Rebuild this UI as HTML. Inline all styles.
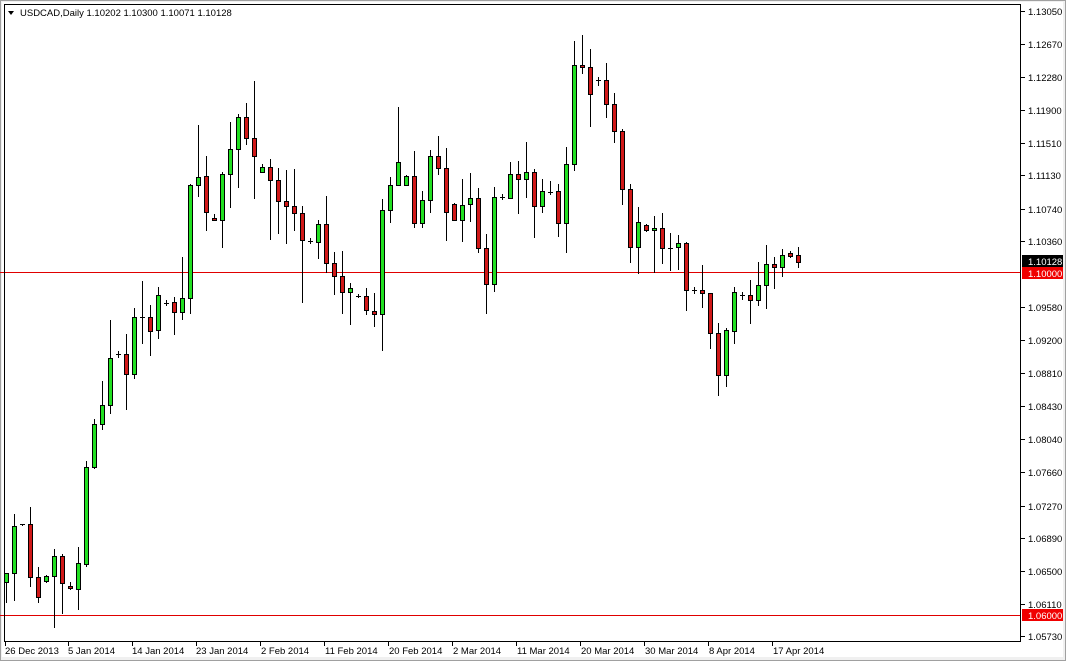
<!DOCTYPE html>
<html><head><meta charset="utf-8"><style>
html,body{margin:0;padding:0;background:#fff;}
body{width:1066px;height:661px;overflow:hidden;position:relative;font-family:"Liberation Sans",sans-serif;}
svg{position:absolute;left:0;top:0;}
svg text{font-family:"Liberation Sans",sans-serif;font-size:9.5px;fill:#000;}
</style></head><body>
<svg id="s" width="1066" height="661" xmlns="http://www.w3.org/2000/svg" shape-rendering="crispEdges">
<rect x="0" y="0" width="1066" height="661" fill="#f0f0f0"/>
<rect x="2" y="2" width="1061" height="655" fill="#fff"/>
<rect x="0.5" y="0.5" width="1065" height="660" fill="none" stroke="#a0a0a0"/>
<line x1="0" y1="272.5" x2="1021" y2="272.5" stroke="#e00000"/>
<line x1="0" y1="615.5" x2="1021" y2="615.5" stroke="#e00000"/>
<g id="c"></g>
<rect x="4.5" y="4.5" width="1016" height="637" fill="none" stroke="#000"/>
<path d="M8 11 L14 11 L11 15 Z" fill="#000" shape-rendering="auto"/>
<text x="20" y="16">USDCAD,Daily  1.10202 1.10300 1.10071 1.10128</text>
<g id="t" stroke="#000"></g>
<text x="1028" y="15">1.13050</text>
<text x="1028" y="48">1.12670</text>
<text x="1028" y="81">1.12280</text>
<text x="1028" y="114">1.11900</text>
<text x="1028" y="147">1.11510</text>
<text x="1028" y="179">1.11130</text>
<text x="1028" y="213">1.10740</text>
<text x="1028" y="245">1.10360</text>
<rect x="1022" y="255" width="41" height="12" fill="#000"/>
<text x="1028" y="265" style="fill:#fff">1.10128</text>
<rect x="1022" y="267" width="41" height="12" fill="#f00000"/>
<text x="1028" y="277" style="fill:#fff">1.10000</text>
<text x="1028" y="311">1.09580</text>
<text x="1028" y="344">1.09200</text>
<text x="1028" y="377">1.08810</text>
<text x="1028" y="410">1.08430</text>
<text x="1028" y="443">1.08040</text>
<text x="1028" y="476">1.07660</text>
<text x="1028" y="510">1.07270</text>
<text x="1028" y="542">1.06890</text>
<text x="1028" y="575">1.06500</text>
<text x="1028" y="608">1.06110</text>
<rect x="1022" y="609" width="41" height="12" fill="#f00000"/>
<text x="1028" y="619" style="fill:#fff">1.06000</text>
<text x="1028" y="640">1.05730</text>
<text x="5" y="654">26 Dec 2013</text>
<text x="68" y="654">5 Jan 2014</text>
<text x="132" y="654">14 Jan 2014</text>
<text x="196" y="654">23 Jan 2014</text>
<text x="261" y="654">2 Feb 2014</text>
<text x="325" y="654">11 Feb 2014</text>
<text x="389" y="654">20 Feb 2014</text>
<text x="453" y="654">2 Mar 2014</text>
<text x="517" y="654">11 Mar 2014</text>
<text x="581" y="654">20 Mar 2014</text>
<text x="645" y="654">30 Mar 2014</text>
<text x="709" y="654">8 Apr 2014</text>
<text x="773" y="654">17 Apr 2014</text>
</svg>
<script>
var D=[[573,573,582,602,'g'],[514,526,573,600,'g'],[524,524,524,525,'d'],[507,524,577,586,'r'],[567,577,597,602,'r'],[575,576,581,582,'g'],[549,556,576,627,'g'],[554,556,583,613,'r'],[582,586,588,589,'r'],[547,563,589,609,'g'],
[461,467,564,566,'g'],[419,424,467,468,'g'],[381,405,424,429,'g'],[320,358,405,413,'g'],[351,354,354,357,'d'],[334,354,374,409,'r'],[308,317,374,378,'g'],[281,317,317,343,'d'],[305,317,331,355,'r'],[287,295,330,338,'g'],
[300,303,303,305,'d'],[297,302,312,334,'r'],[257,298,312,319,'g'],[184,185,298,313,'g'],[125,177,185,196,'g'],[156,176,212,230,'r'],[214,218,220,220,'r'],[172,174,220,247,'g'],[122,149,174,207,'g'],[114,117,149,187,'g'],
[103,117,138,144,'r'],[81,138,156,198,'r'],[164,167,172,172,'g'],[159,167,180,239,'r'],[168,180,201,233,'r'],[170,201,206,243,'r'],[169,206,213,230,'r'],[206,213,240,302,'r'],[238,241,241,243,'d'],[220,224,242,258,'g'],
[196,224,263,272,'r'],[252,263,276,294,'r'],[251,276,292,313,'r'],[283,288,292,324,'g'],[294,296,296,297,'d'],[288,296,310,314,'r'],[293,311,314,326,'r'],[199,210,314,350,'g'],[177,185,210,222,'g'],[107,162,185,185,'g'],
[175,176,185,185,'g'],[151,176,223,227,'r'],[191,200,223,227,'g'],[150,156,200,212,'g'],[136,156,168,174,'r'],[148,168,212,240,'r'],[203,204,220,220,'r'],[179,205,220,241,'g'],[173,198,204,221,'g'],[188,198,248,252,'r'],
[234,248,284,313,'r'],[187,197,284,291,'g'],[194,197,197,199,'d'],[162,174,198,198,'g'],[161,174,179,213,'r'],[142,172,179,197,'g'],[169,172,206,237,'r'],[179,191,206,212,'g'],[181,192,192,194,'d'],[184,191,223,236,'r'],
[147,164,223,252,'g'],[41,65,164,170,'g'],[35,65,67,73,'r'],[49,67,94,126,'r'],[77,80,80,85,'d'],[63,80,104,117,'r'],[93,104,131,142,'r'],[129,131,189,204,'r'],[184,189,247,262,'r'],[207,222,247,273,'g'],
[224,225,230,231,'r'],[216,228,230,272,'g'],[213,228,248,263,'r'],[233,248,248,270,'d'],[235,243,247,269,'g'],[242,243,290,310,'r'],[287,290,290,293,'d'],[265,290,293,307,'r'],[293,293,333,348,'r'],[323,333,375,395,'r'],
[328,330,375,386,'g'],[287,292,331,343,'g'],[292,295,295,299,'d'],[280,295,300,323,'r'],[262,285,300,305,'g'],[245,264,285,308,'g'],[257,264,267,288,'r'],[249,255,267,276,'g'],[251,253,256,257,'r'],[247,255,262,267,'r']];
var h='';
for(var i=0;i<D.length;i++){var d=D[i],cx=6+8*i,wx=cx+0.5;
h+='<line x1="'+wx+'" y1="'+d[0]+'" x2="'+wx+'" y2="'+(d[3]+1)+'" stroke="#000"/>';
if(d[4]=='d'){h+='<line x1="'+(cx-2)+'" y1="'+(d[1]+0.5)+'" x2="'+(cx+3)+'" y2="'+(d[1]+0.5)+'" stroke="#000"/>';}
else{var ht=Math.max(d[2]-d[1],2);h+='<rect x="'+(cx-1.5)+'" y="'+(d[1]+0.5)+'" width="4" height="'+ht+'" fill="'+(d[4]=='g'?'#22e022':'#d01818')+'" stroke="#000"/>';}}
document.getElementById('c').innerHTML=h;
var t='',ys=[11,44,77,110,143,175,209,241,307,340,373,406,439,472,506,538,571,604,636];
for(var j=0;j<ys.length;j++)t+='<line x1="1021" y1="'+(ys[j]+0.5)+'" x2="1025" y2="'+(ys[j]+0.5)+'"/>';
for(var k=0;k<13;k++){var x=5.5+(k==0?0:64*k-1);t+='<line x1="'+x+'" y1="642" x2="'+x+'" y2="646"/>';}
document.getElementById('t').innerHTML=t;
</script>
</body></html>
